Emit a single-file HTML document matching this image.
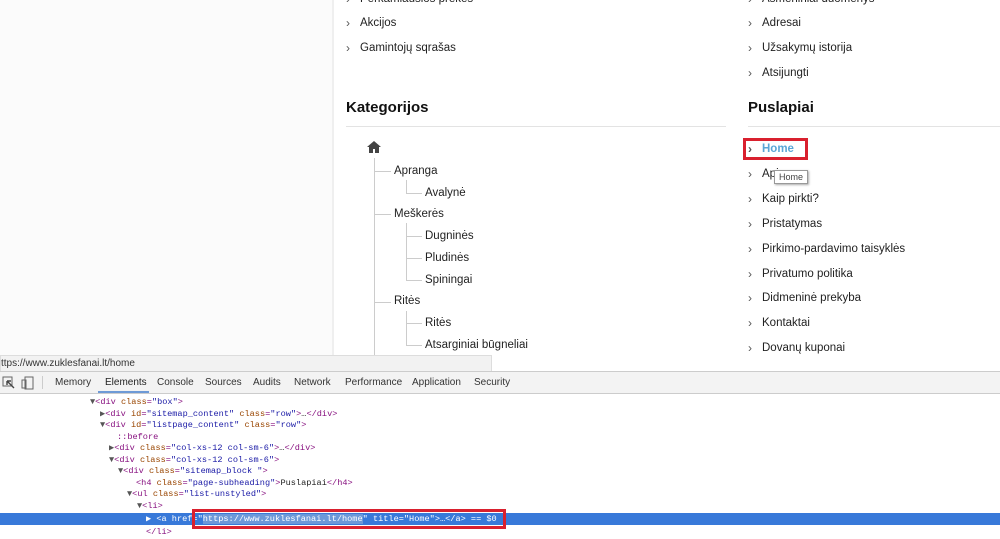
<!DOCTYPE html>
<html><head><meta charset="utf-8"><style>
*{margin:0;padding:0;box-sizing:border-box}
body{width:1000px;height:539px;overflow:hidden;position:relative;background:#fff;font-family:"Liberation Sans",sans-serif;color:#222}
.a{position:absolute;white-space:nowrap}
.side{position:absolute;left:0;top:0;width:334px;height:371px;background:#fbfbfb;border-right:2px solid #efefef}
.li{position:absolute;font-size:11.5px;color:#222}
.li:before{content:"›";position:absolute;left:-14px;top:-1px;font-size:12px;color:#555}
h4{position:absolute;font-size:15px;font-weight:bold;color:#111}
.hr{position:absolute;height:1px;background:#e3e3e3}
.t{position:absolute;font-size:11.5px;color:#222}
.v{position:absolute;width:1px;background:#ccc}
.h{position:absolute;height:1px;background:#ccc}
.code{position:absolute;font-family:"Liberation Mono",monospace;font-size:8.6px;white-space:nowrap;color:#881280}
.at{color:#994500}.av{color:#1a1aa6}.tx{color:#222}.tri{color:#555}
</style></head><body>
<div class="side"></div>
<div class="li" style="left:360px;top:-7px">Perkamiausios prekės</div>
<div class="li" style="left:360px;top:17px">Akcijos</div>
<div class="li" style="left:360px;top:42px">Gamintojų sqrašas</div>
<h4 style="left:346px;top:99px">Kategorijos</h4>
<div class="hr" style="left:346px;top:126px;width:380px"></div>
<svg class="a" style="left:367px;top:141px" width="14" height="12" viewBox="0 0 14 12"><path d="M7 0L0 6h2v6h4V8h2v4h4V6h2z" fill="#444"/></svg>
<div class="v" style="left:374px;top:158px;height:200px"></div>
<div class="h" style="left:375px;top:171px;width:16px"></div>
<div class="t" style="left:394px;top:165px">Apranga</div>
<div class="v" style="left:406px;top:180px;height:13px"></div>
<div class="h" style="left:406px;top:193px;width:16px"></div>
<div class="t" style="left:425px;top:187px">Avalynė</div>
<div class="h" style="left:375px;top:214px;width:16px"></div>
<div class="t" style="left:394px;top:208px">Meškerės</div>
<div class="v" style="left:406px;top:223px;height:57px"></div>
<div class="h" style="left:406px;top:236px;width:16px"></div>
<div class="t" style="left:425px;top:230px">Dugninės</div>
<div class="h" style="left:406px;top:258px;width:16px"></div>
<div class="t" style="left:425px;top:252px">Pludinės</div>
<div class="h" style="left:406px;top:280px;width:16px"></div>
<div class="t" style="left:425px;top:274px">Spiningai</div>
<div class="h" style="left:375px;top:302px;width:16px"></div>
<div class="t" style="left:394px;top:295px">Ritės</div>
<div class="v" style="left:406px;top:311px;height:34px"></div>
<div class="h" style="left:406px;top:323px;width:16px"></div>
<div class="t" style="left:425px;top:317px">Ritės</div>
<div class="h" style="left:406px;top:345px;width:16px"></div>
<div class="t" style="left:425px;top:339px">Atsarginiai būgneliai</div>

<div class="li" style="left:762px;top:-7px">Asmeniniai duomenys</div>
<div class="li" style="left:762px;top:17px">Adresai</div>
<div class="li" style="left:762px;top:42px">Užsakymų istorija</div>
<div class="li" style="left:762px;top:67px">Atsijungti</div>
<h4 style="left:748px;top:99px">Puslapiai</h4>
<div class="hr" style="left:748px;top:126px;width:252px"></div>
<div class="a" style="left:743px;top:138px;width:65px;height:22px;border:3px solid #d9202e"></div>
<div class="li" style="left:762px;top:143px;color:#5aa6d6;font-weight:bold">Home</div>
<div class="li" style="left:762px;top:168px">Apie</div>
<div class="a" style="left:774px;top:170px;border:1px solid #999;background:#fff;font-size:9px;padding:1px 4px;color:#444;box-shadow:1px 1px 2px #aaa">Home</div>
<div class="li" style="left:762px;top:193px">Kaip pirkti?</div>
<div class="li" style="left:762px;top:218px">Pristatymas</div>
<div class="li" style="left:762px;top:243px">Pirkimo-pardavimo taisyklės</div>
<div class="li" style="left:762px;top:268px">Privatumo politika</div>
<div class="li" style="left:762px;top:292px">Didmeninė prekyba</div>
<div class="li" style="left:762px;top:317px">Kontaktai</div>
<div class="li" style="left:762px;top:342px">Dovanų kuponai</div>

<div class="a" style="left:0;top:355px;width:492px;height:17px;background:#f2f2f2;border:1px solid #ddd;font-size:10px;color:#333;padding:2px 0 0 0">ttps://www.zuklesfanai.lt/home</div>
<div class="a" style="left:0;top:371px;width:1000px;height:23px;background:#f3f3f3;border-top:1px solid #ccc;border-bottom:1px solid #ccc"></div>
<svg class="a" style="left:2px;top:376px" width="36" height="14"><rect x="1" y="1" width="9" height="9" fill="none" stroke="#666"/><path d="M5 5l7 7M5 5h4M5 5v4" stroke="#444" stroke-width="1.4"/><rect x="23" y="1" width="8" height="12" fill="none" stroke="#666"/><rect x="20" y="4" width="4" height="8" fill="none" stroke="#666"/></svg>
<div class="a" style="left:42px;top:376px;width:1px;height:13px;background:#ccc"></div>
<div class="a" style="top:377px;left:55px;font-size:10px;color:#333">Memory</div>
<div class="a" style="top:377px;left:105px;font-size:10px;color:#222">Elements</div>
<div class="a" style="top:391px;left:98px;width:51px;height:2px;background:#6e9ad6"></div>
<div class="a" style="top:377px;left:157px;font-size:10px;color:#333">Console</div>
<div class="a" style="top:377px;left:205px;font-size:10px;color:#333">Sources</div>
<div class="a" style="top:377px;left:253px;font-size:10px;color:#333">Audits</div>
<div class="a" style="top:377px;left:294px;font-size:10px;color:#333">Network</div>
<div class="a" style="top:377px;left:345px;font-size:10px;color:#333">Performance</div>
<div class="a" style="top:377px;left:412px;font-size:10px;color:#333">Application</div>
<div class="a" style="top:377px;left:474px;font-size:10px;color:#333">Security</div>

<div class="code" style="left:90px;top:397px"><span class="tri">▼</span>&lt;div <span class="at">class</span>=<span class="av">"box"</span>&gt;</div>
<div class="code" style="left:100px;top:409px"><span class="tri">▶</span>&lt;div <span class="at">id</span>=<span class="av">"sitemap_content"</span> <span class="at">class</span>=<span class="av">"row"</span>&gt;<span class="tx">…</span>&lt;/div&gt;</div>
<div class="code" style="left:100px;top:420px"><span class="tri">▼</span>&lt;div <span class="at">id</span>=<span class="av">"listpage_content"</span> <span class="at">class</span>=<span class="av">"row"</span>&gt;</div>
<div class="code" style="left:117px;top:432px">::before</div>
<div class="code" style="left:109px;top:443px"><span class="tri">▶</span>&lt;div <span class="at">class</span>=<span class="av">"col-xs-12 col-sm-6"</span>&gt;<span class="tx">…</span>&lt;/div&gt;</div>
<div class="code" style="left:109px;top:455px"><span class="tri">▼</span>&lt;div <span class="at">class</span>=<span class="av">"col-xs-12 col-sm-6"</span>&gt;</div>
<div class="code" style="left:118px;top:466px"><span class="tri">▼</span>&lt;div <span class="at">class</span>=<span class="av">"sitemap_block "</span>&gt;</div>
<div class="code" style="left:136px;top:478px">&lt;h4 <span class="at">class</span>=<span class="av">"page-subheading"</span>&gt;<span class="tx">Puslapiai</span>&lt;/h4&gt;</div>
<div class="code" style="left:127px;top:489px"><span class="tri">▼</span>&lt;ul <span class="at">class</span>=<span class="av">"list-unstyled"</span>&gt;</div>
<div class="code" style="left:137px;top:501px"><span class="tri">▼</span>&lt;li&gt;</div>
<div class="a" style="left:0;top:513px;width:1000px;height:12px;background:#3879d9"></div>
<div class="code" style="left:146px;top:514px;color:#fff">▶ &lt;a href="<span style="background:#6c98d8">https://www.zuklesfanai.lt/home</span>" title="Home"&gt;…&lt;/a&gt; == $0</div>
<div class="a" style="left:192px;top:509px;width:314px;height:20px;border:3px solid #d9202e"></div>
<div class="code" style="left:146px;top:527px">&lt;/li&gt;</div>
</body></html>
